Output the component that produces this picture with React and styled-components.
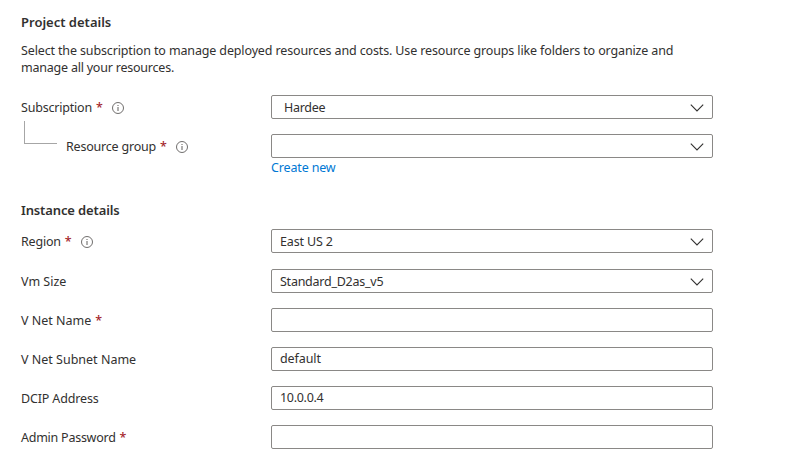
import React from "react";
import styled, { createGlobalStyle } from "styled-components";

const GlobalStyle = createGlobalStyle`
  * { box-sizing: border-box; }
  body {
    margin: 0;
    background: #fff;
    color: #323130;
    font-family: "Noto Sans", "Open Sans", sans-serif;
    font-size: 12.5px;
    line-height: 17px;
  }
`;

const Page = styled.main`
  width: 790px;
  height: 471px;
  padding: 14px 0 0 21px;
  overflow: hidden;
`;

const Heading = styled.h2`
  margin: 0;
  font-size: 13px;
  font-weight: 600;
  line-height: 17px;
`;

const Description = styled.p`
  width: 680px;
  margin: 11px 0 19px;
  white-space: nowrap;
`;

const DescriptionLine = styled.span`
  display: block;
  letter-spacing: ${(p) => p.$tracking || "0"};
`;

const Row = styled.div`
  display: grid;
  grid-template-columns: 250px 442px;
  height: 24px;
  margin-bottom: ${(p) => p.$gap || 15}px;
`;

const Label = styled.div`
  display: flex;
  align-items: center;
  white-space: nowrap;
`;

const LabelText = styled.span`
  letter-spacing: ${(p) => p.$tracking || "0"};
`;

const Required = styled.span`
  margin-left: 4px;
  color: #a4262c;
  font-weight: 500;
`;

const InfoSvg = styled.svg`
  margin: 1px 0 0 9px;
`;

const Branch = styled.span`
  align-self: flex-start;
  width: 33px;
  height: 23px;
  margin: -13px 9px 0 3px;
  border: solid #a6a6a6;
  border-width: 0 0 1px 1px;
`;

const Field = styled.div`
  display: flex;
  align-items: center;
  justify-content: space-between;
  height: 24px;
  padding: 0 8px 1px ${(p) => p.$indent || 8}px;
  border: 1px solid #8a8886;
  border-radius: 2px;
  letter-spacing: ${(p) => p.$tracking || "0"};
`;

const SelectField = styled(Field)`
  padding-top: 1px;
  padding-bottom: 0;
`;

const CreateLink = styled.a`
  display: block;
  width: max-content;
  margin: -14px 0 26px 250px;
  color: #0078d4;
  text-decoration: none;
  letter-spacing: -0.15px;
`;

const InstanceHeading = styled(Heading)`
  margin-bottom: 10px;
  letter-spacing: -0.13px;
`;

const InfoIcon = () => (
  <InfoSvg width="12" height="12" viewBox="0 0 12 12" fill="none">
    <circle cx="6" cy="6" r="5.5" stroke="#605e5c" strokeWidth="0.9" />
    <path d="M6 5v4" stroke="#605e5c" />
    <path d="M6 3v1" stroke="#605e5c" />
  </InfoSvg>
);

const Chevron = () => (
  <svg width="14" height="8" viewBox="0 0 14 8" fill="none">
    <path d="M0.8 0.7L7 6.9L13.2 0.7" stroke="#323130" strokeWidth="1.1" />
  </svg>
);

function FormRow({ label, tracking, required, info, nested, value, valueTracking, indent, select, gap }) {
  const Control = select ? SelectField : Field;
  return (
    <Row $gap={gap}>
      <Label>
        {nested && <Branch />}
        <LabelText $tracking={tracking}>{label}</LabelText>
        {required && <Required>*</Required>}
        {info && <InfoIcon />}
      </Label>
      <Control $indent={indent} $tracking={valueTracking}>
        <span>{value}</span>
        {select && <Chevron />}
      </Control>
    </Row>
  );
}

export default function App() {
  return (
    <>
      <GlobalStyle />
      <Page>
        <Heading>Project details</Heading>
        <Description>
          <DescriptionLine $tracking="-0.136px">
            Select the subscription to manage deployed resources and costs. Use resource groups like folders to organize and
          </DescriptionLine>
          <DescriptionLine $tracking="-0.22px">manage all your resources.</DescriptionLine>
        </Description>
        <FormRow label="Subscription" tracking="-0.2px" required info select value="Hardee" valueTracking="-0.3px" indent={12} />
        <FormRow label="Resource group" tracking="-0.2px" required info nested select />
        <CreateLink>Create new</CreateLink>
        <InstanceHeading>Instance details</InstanceHeading>
        <FormRow label="Region" tracking="-0.2px" required info select value="East US 2" valueTracking="-0.15px" gap={16} />
        <FormRow label="Vm Size" select value="Standard_D2as_v5" valueTracking="-0.25px" />
        <FormRow label="V Net Name" required />
        <FormRow label="V Net Subnet Name" value="default" valueTracking="-0.1px" />
        <FormRow label="DCIP Address" tracking="-0.15px" value="10.0.0.4" valueTracking="-0.3px" />
        <FormRow label="Admin Password" tracking="-0.25px" required />
      </Page>
    </>
  );
}
